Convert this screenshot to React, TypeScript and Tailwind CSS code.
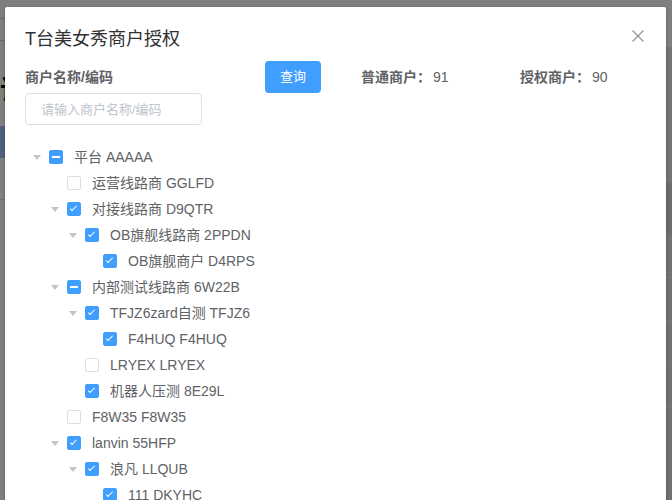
import React from 'react';

type Check = 'on' | 'off' | 'half';

type Row = {
  level: number;
  label: string;
  state: Check;
  expanded?: boolean;
};

const ROWS: Row[] = [
  { level: 0, label: '平台 AAAAA', state: 'half', expanded: true },
  { level: 1, label: '运营线路商 GGLFD', state: 'off' },
  { level: 1, label: '对接线路商 D9QTR', state: 'on', expanded: true },
  { level: 2, label: 'OB旗舰线路商 2PPDN', state: 'on', expanded: true },
  { level: 3, label: 'OB旗舰商户 D4RPS', state: 'on' },
  { level: 1, label: '内部测试线路商 6W22B', state: 'half', expanded: true },
  { level: 2, label: 'TFJZ6zard自测 TFJZ6', state: 'on', expanded: true },
  { level: 3, label: 'F4HUQ F4HUQ', state: 'on' },
  { level: 2, label: 'LRYEX LRYEX', state: 'off' },
  { level: 2, label: '机器人压测 8E29L', state: 'on' },
  { level: 1, label: 'F8W35 F8W35', state: 'off' },
  { level: 1, label: 'lanvin 55HFP', state: 'on', expanded: true },
  { level: 2, label: '浪凡 LLQUB', state: 'on', expanded: true },
  { level: 3, label: '111 DKYHC', state: 'on' },
];

const INDENT = ['pl-0', 'pl-[18px]', 'pl-[36px]', 'pl-[54px]'];

function Checkbox({ state }: { state: Check }) {
  if (state === 'off') {
    return <span className="relative block h-[14px] w-[14px] shrink-0 rounded-[2px] border border-[#dcdfe6] bg-white" />;
  }
  return (
    <span className="relative block h-[14px] w-[14px] shrink-0 rounded-[2px] border border-[#409eff] bg-[#409eff]">
      {state === 'on' ? (
        <span className="absolute left-[4px] top-[1px] h-[7px] w-[3px] rotate-45 border-b border-r border-white" />
      ) : (
        <span className="absolute left-[2px] top-[5px] h-[2px] w-[8px] bg-white" />
      )}
    </span>
  );
}

function Caret({ show }: { show?: boolean }) {
  return (
    <span className="flex h-[26px] w-[24px] shrink-0 items-center justify-center">
      {show && (
        <svg width="8" height="5" viewBox="0 0 8 5">
          <polygon points="0,0 8,0 4,5" fill="#c0c4cc" />
        </svg>
      )}
    </span>
  );
}

function TreeRow({ row }: { row: Row }) {
  return (
    <div className={`flex h-[26px] items-center ${INDENT[row.level]}`}>
      <Caret show={row.expanded} />
      <Checkbox state={row.state} />
      <span className="ml-[11px] whitespace-nowrap text-[14px] text-[#606266]">{row.label}</span>
    </div>
  );
}

function BackgroundPage() {
  return (
    <div className="flex h-[500px] w-[672px]">
      <div className="flex w-[60px] flex-col bg-white">
        <div className="h-[18px]" />
        <div className="h-[22px] border-t border-[#d0d0d0]" />
        <div className="h-[37px] border-t border-[#d0d0d0]" />
        <div className="h-[26px] text-[26px] font-bold leading-[26px] text-black">该</div>
        <div className="h-[23px]" />
        <div className="h-[32px] bg-[#9fc2f5]" />
        <div className="h-[42px] border-b border-[#e0e0e0]" />
        <div className="flex-1 bg-white" />
      </div>
      <div className="flex flex-1 flex-col">
        <div className="h-[47px] bg-white" />
        <div className="h-[136px] bg-[#e9e9e9]" />
        <div className="h-[52px] bg-[#d9d9d9]" />
        <div className="h-[43px] border-b border-[#f2f2f2] bg-[#e4e4e4]" />
        <div className="h-[43px] border-b border-[#f2f2f2] bg-[#e4e4e4]" />
        <div className="h-[43px] border-b border-[#f2f2f2] bg-[#e4e4e4]" />
        <div className="h-[43px] border-b border-[#f2f2f2] bg-[#e4e4e4]" />
        <div className="flex-1 bg-[#e4e4e4]" />
      </div>
    </div>
  );
}

export default function App() {
  return (
    <div
      className="relative h-[500px] w-[672px] overflow-hidden"
      style={{ fontFamily: '"Liberation Sans", "Noto Sans CJK SC", sans-serif' }}
    >
      <BackgroundPage />
      <div className="absolute inset-0 bg-black/50" />

      <div className="absolute left-[5px] top-[7px] h-[520px] w-[661px] rounded-[2px] bg-white shadow-[0_1px_3px_rgba(0,0,0,0.3)]">
        <div className="relative px-5 pb-[10px] pt-5">
          <span className="block text-[18px] leading-[24px] text-[#303133]">T台美女秀商户授权</span>
          <button className="absolute right-5 top-[21px] flex h-4 w-4 items-center justify-center">
            <svg width="12" height="12" viewBox="0 0 12 12">
              <path d="M0.5 0.5 L11.5 11.5 M11.5 0.5 L0.5 11.5" stroke="#909399" strokeWidth="1.1" />
            </svg>
          </button>
        </div>

        <div className="px-5">
          <div className="flex items-start">
            <div className="flex w-[177px] flex-col">
              <label className="flex h-8 items-center text-[14px] font-bold text-[#606266]">商户名称/编码</label>
              <input
                className="h-8 w-[177px] rounded-[4px] border border-[#dcdfe6] px-[15px] text-[13px] text-[#606266] outline-none placeholder:text-[#c0c4cc]"
                placeholder="请输入商户名称/编码"
              />
            </div>
            <button className="ml-[63px] h-8 w-14 rounded-[4px] bg-[#409eff] text-[13px] text-white">查询</button>
            <div className="ml-10 flex h-8 w-[159px] items-center text-[14px] text-[#606266]">
              <span className="font-bold">普通商户：</span>
              <span className="ml-[2px]">91</span>
            </div>
            <div className="flex h-8 items-center text-[14px] text-[#606266]">
              <span className="font-bold">授权商户：</span>
              <span className="ml-[2px]">90</span>
            </div>
          </div>

          <div className="mt-[19px] flex flex-col">
            {ROWS.map((row, i) => (
              <TreeRow key={i} row={row} />
            ))}
          </div>
        </div>
      </div>
    </div>
  );
}
